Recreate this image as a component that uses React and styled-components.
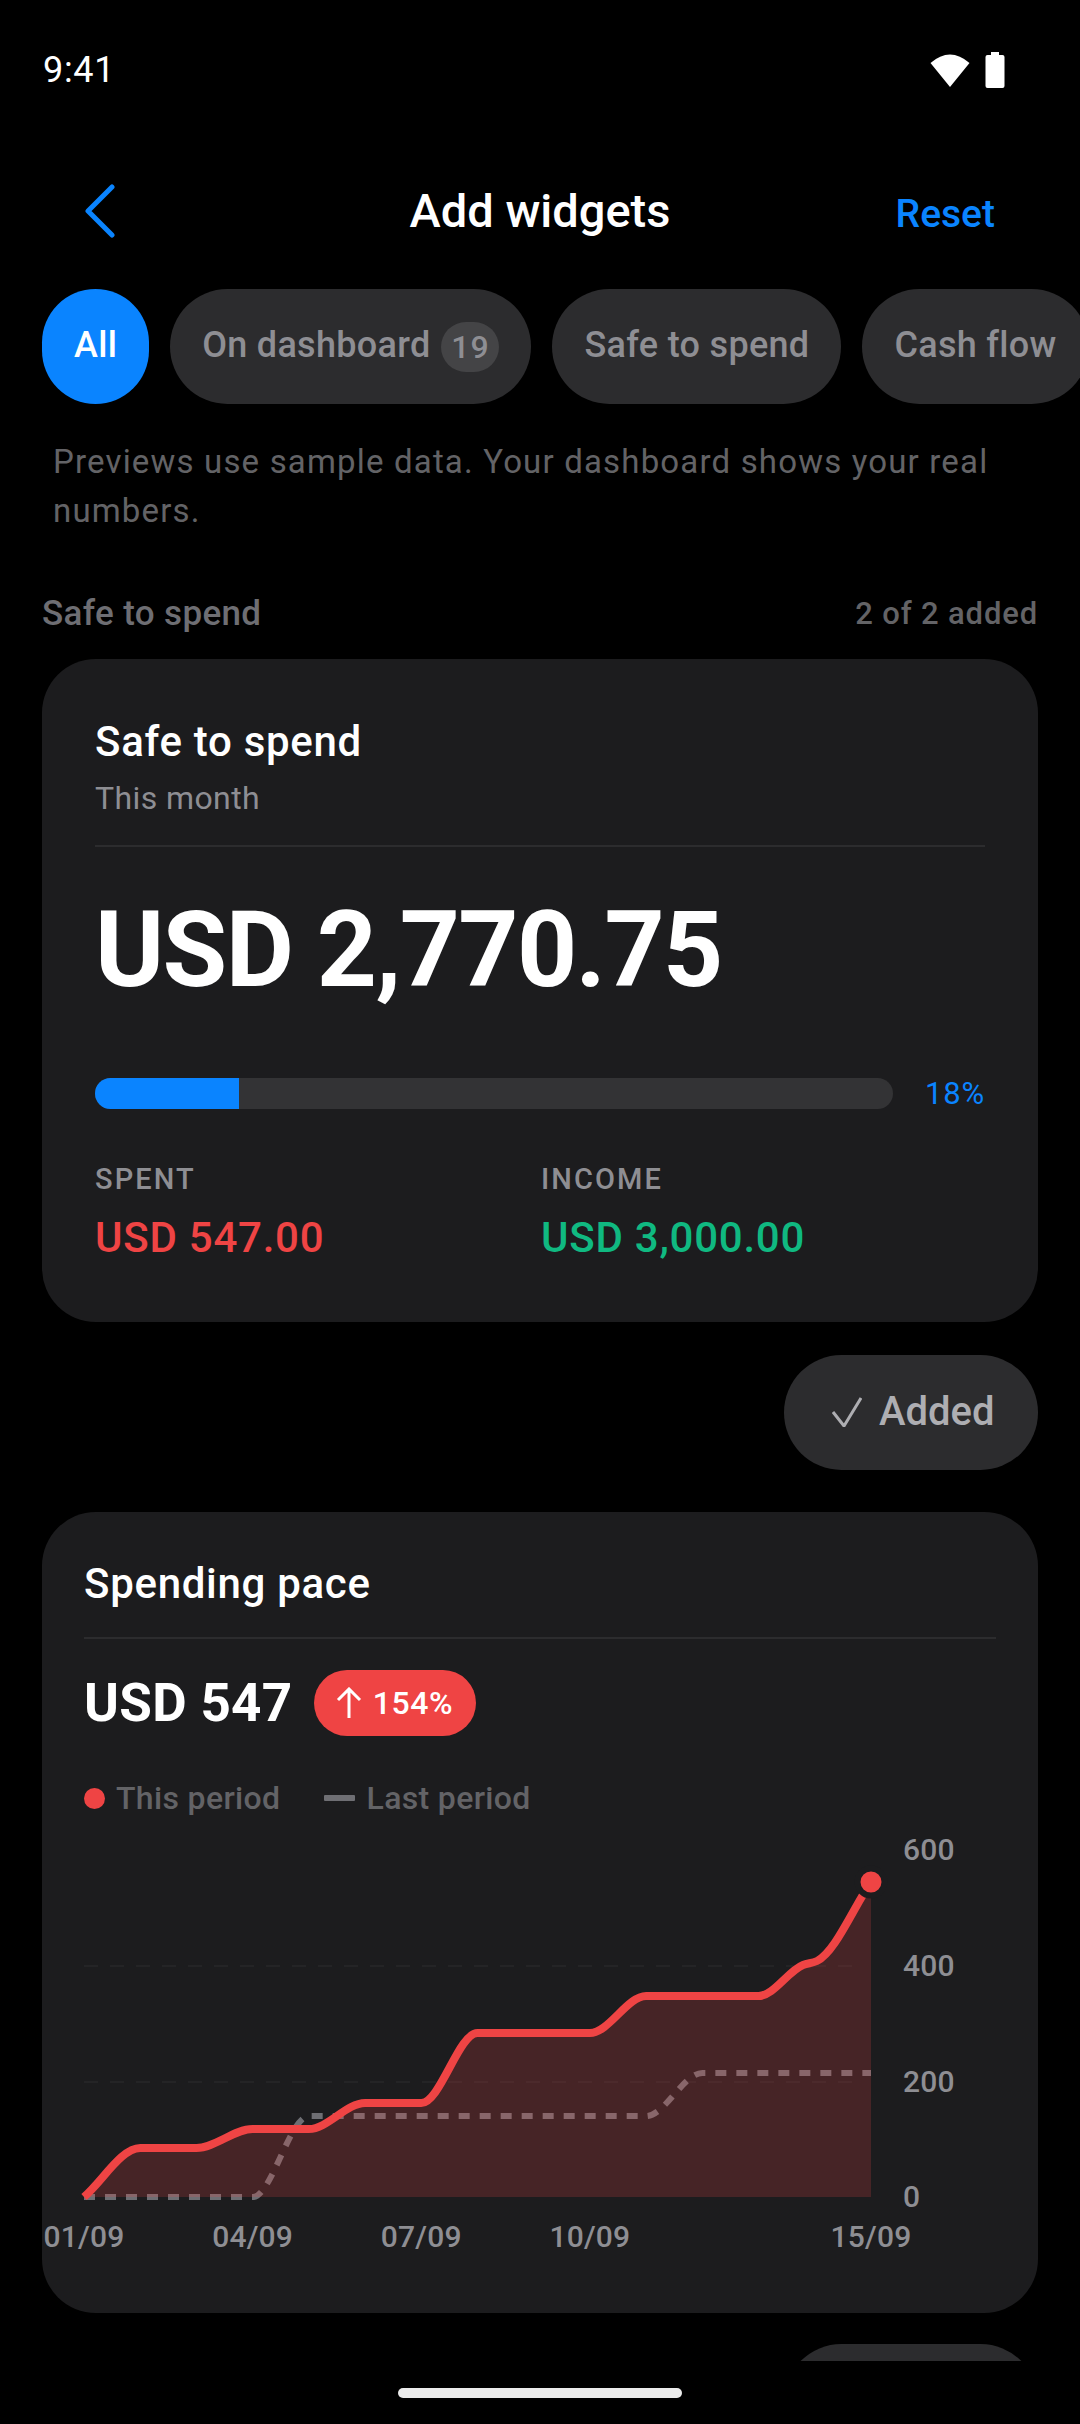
import React from "react";
import styled, { createGlobalStyle } from "styled-components";

const Global = createGlobalStyle`
  html, body { margin: 0; padding: 0; background: #000; }
  * { box-sizing: border-box; }
  body { font-family: Roboto, "Noto Sans", sans-serif; }
`;

const Page = styled.div`
  width: 1080px; height: 2424px; background: #000; color: #fff;
  overflow: hidden; display: flex; flex-direction: column;
`;
const StatusBar = styled.div`
  height: 140px; flex: none; padding: 0 75px 0 43px;
  display: flex; align-items: center; justify-content: space-between;
`;
const Clock = styled.span`font-size: 36px; letter-spacing: 0.7px;`;
const Nav = styled.div`
  height: 144px; flex: none; margin-bottom: 5px; padding: 0 85px;
  display: grid; grid-template-columns: 1fr auto 1fr; align-items: center;
`;
const Title = styled.h1`margin: 0; font-size: 47px; font-weight: 500; position: relative; top: -2px;`;
const Reset = styled.span`justify-self: end; font-size: 39px; font-weight: 500; color: #0a84ff; position: relative; top: 2px;`;
const Chips = styled.div`
  flex: none; display: flex; gap: 21px; padding-left: 42px; width: 1200px;
`;
const Chip = styled.div`
  height: 115px; flex: none; border-radius: 58px; padding: 0 32px;
  display: flex; align-items: center; gap: 11px;
  background: ${p => (p.$on ? "#0a84ff" : "#2c2c2e")};
  color: ${p => (p.$on ? "#fff" : "#8e8e93")};
  font-size: 36px; font-weight: 500; letter-spacing: 0.3px;
  span { position: relative; top: -2px; }
`;
const Count = styled.b`
  width: 58px; height: 50px; border-radius: 25px; background: #444446;
  display: flex; align-items: center; justify-content: center;
  font-size: 32px; font-weight: 500; color: #8e8e93; letter-spacing: 1px;
`;
const Content = styled.div`
  height: 1957px; flex: none; padding: 0 42px; overflow: hidden;
`;
const Note = styled.p`
  margin: 33px 11px 0; font-size: 33px; line-height: 49px; color: #636366; letter-spacing: 1.17px;
`;
const SectionHead = styled.div`
  margin-top: 58px; height: 40px; display: flex; align-items: center; justify-content: space-between;
  color: #636366; font-weight: 500;
`;
const SectionName = styled.span`font-size: 35px; letter-spacing: 0.35px; color: #6e6e73;`;
const SectionCount = styled.span`font-size: 31px; letter-spacing: 0.85px;`;
const Card = styled.section`
  background: #1c1c1e; border-radius: 54px; margin-top: ${p => p.$mt}px;
  height: ${p => p.$h}px; padding: ${p => p.$pad};
`;
const CardTitle = styled.h2`margin: 0; font-size: 42px; line-height: 50px; font-weight: 500; letter-spacing: 0.7px;`;
const CardSub = styled.div`margin-top: 10px; font-size: 32px; line-height: 42px; color: #8e8e93; letter-spacing: 0.4px;`;
const Rule = styled.hr`
  border: 0; height: 2px; background: #2c2c2e; margin: ${p => p.$m};
`;
const BigAmount = styled.div`
  margin-top: 39px; font-size: 105px; line-height: 130px; font-weight: 700; letter-spacing: -1.6px;
`;
const ProgressRow = styled.div`
  margin-top: 59px; display: flex; align-items: center; justify-content: space-between;
`;
const Track = styled.div`
  width: 798px; height: 31px; border-radius: 16px; background: #333335; overflow: hidden;
`;
const Fill = styled.div`height: 100%; background: #0a84ff;`;
const Pct = styled.span`font-size: 31px; color: #0a84ff; letter-spacing: 0.8px;`;
const Stats = styled.div`
  margin-top: 50px; display: grid; grid-template-columns: 446px 1fr;
`;
const StatLabel = styled.div`font-size: 29px; line-height: 34px; font-weight: 500; color: #8e8e93; letter-spacing: 2.1px;`;
const StatValue = styled.div`
  margin-top: 17px; font-size: 42px; line-height: 50px; font-weight: 500; letter-spacing: 0.75px;
  color: ${p => p.$c};
`;
const ActionRow = styled.div`margin-top: 33px; display: flex; justify-content: flex-end;`;
const ActionButton = styled.div`
  width: 254px; height: 115px; border-radius: 58px; background: #2c2c2e; padding: 0 0 2px 48px;
  display: flex; align-items: center; gap: 17px;
  font-size: 40px; font-weight: 500; color: #aeaeb2;
`;
const AmountRow = styled.div`display: flex; align-items: center; gap: 21px; height: 66px; margin-top: 31px;`;
const Amount = styled.div`font-size: 53px; font-weight: 700; letter-spacing: 0.3px;`;
const Badge = styled.div`
  width: 162px; height: 66px; border-radius: 33px; background: #ef4444;
  display: flex; align-items: center; justify-content: center; gap: 11px;
  font-size: 32px; font-weight: 500; letter-spacing: 0.6px;
`;
const Legend = styled.div`
  margin-top: 42px; display: flex; align-items: center; height: 40px;
  font-size: 32px; font-weight: 500; color: #636366; letter-spacing: 0.35px;
`;
const LegendDot = styled.i`width: 21px; height: 21px; border-radius: 50%; background: #ef4444; margin-right: 11px;`;
const LegendDash = styled.i`width: 31px; height: 6px; border-radius: 1px; background: #6e6e73; margin: 0 12px 0 43px;`;
const ChartSvg = styled.svg`display: block; margin: 12px 0 0 -84px;`;
const AxisText = styled.text`
  font-family: Roboto, sans-serif; font-size: 30px; font-weight: 500; fill: #8e8e93; letter-spacing: 0.2px;
`;
const HomeArea = styled.div`
  flex: 1; display: flex; justify-content: center; background: #000; padding-top: 27px;
`;
const HomeBar = styled.div`width: 284px; height: 10px; border-radius: 5px; background: #ebebeb;`;

function monotonePath(pts) {
  const n = pts.length;
  const s = [];
  for (let i = 0; i < n - 1; i++) s.push((pts[i + 1][1] - pts[i][1]) / (pts[i + 1][0] - pts[i][0]));
  const t = pts.map((_, i) => {
    if (i === 0) return s[0];
    if (i === n - 1) return s[n - 2];
    if (s[i - 1] * s[i] <= 0) return 0;
    return (2 * s[i - 1] * s[i]) / (s[i - 1] + s[i]);
  });
  let d = `M${pts[0][0]} ${pts[0][1]}`;
  for (let i = 0; i < n - 1; i++) {
    const h = (pts[i + 1][0] - pts[i][0]) / 3;
    d += `C${pts[i][0] + h} ${pts[i][1] + t[i] * h} ${pts[i + 1][0] - h} ${pts[i + 1][1] - t[i + 1] * h} ${pts[i + 1][0]} ${pts[i + 1][1]}`;
  }
  return d;
}

const dayX = i => 84 + (i * 787) / 14;
const BASE = 2197;
const thisY = [2197, 2148, 2148, 2129, 2129, 2103, 2103, 2033, 2033, 2033, 1996, 1996, 1996];
const lastY = [2197, 2197, 2197, 2197, 2116, 2116, 2116, 2116, 2116, 2116, 2116, 2073, 2073, 2073, 2073];
const thisPts = [...thisY.map((y, i) => [dayX(i), y]), [803, 1965], [817, 1961], [871, 1882]];
const lastPts = lastY.map((y, i) => [dayX(i), y]);
const thisPath = monotonePath(thisPts);
const lastPath = monotonePath(lastPts);
const top = 1830;

const Chart = () => (
  <ChartSvg width="1080" height="430" viewBox={`0 ${top} 1080 430`}>
    {[1966, 2082].map(y => (
      <line key={y} x1="84" x2="862" y1={y} y2={y} stroke="#242426" strokeWidth="2" strokeDasharray="14 12" />
    ))}
    <path d={lastPath} fill="none" stroke="#6e6e73" strokeWidth="6" strokeDasharray="11 10" />
    <path d={`${thisPath}L871 ${BASE}L84 ${BASE}Z`} fill="#ef4444" fillOpacity="0.2" />
    <path d={thisPath} fill="none" stroke="#ef4444" strokeWidth="8" strokeLinejoin="round" />
    <circle cx="871" cy="1882" r="13.5" fill="#ef4444" stroke="#1c1c1e" strokeWidth="6" />
    {[["600", 1850], ["400", 1966], ["200", 2082], ["0", 2197]].map(([t, y]) => (
      <AxisText key={t} x="903" y={y + 10}>{t}</AxisText>
    ))}
    {[["01/09", 0], ["04/09", 3], ["07/09", 6], ["10/09", 9], ["15/09", 14]].map(([t, i]) => (
      <AxisText key={t} x={dayX(i)} y="2247" textAnchor="middle">{t}</AxisText>
    ))}
  </ChartSvg>
);

export default function App() {
  return (
    <Page>
      <Global />
      <StatusBar>
        <Clock>9:41</Clock>
        <svg width="76" height="36" viewBox="0 0 76 36">
          <path d="M21 35 L1.5 11 Q21 -6 40.5 11 Z" fill="#fff" />
          <path d="M62 0h8v3h3.500a2 2 0 0 1 2 2v29a2 2 0 0 1-2 2H58.500a2 2 0 0 1-2-2V5a2 2 0 0 1 2-2h3.500z" fill="#fff" />
        </svg>
      </StatusBar>
      <Nav>
        <svg width="32" height="56" viewBox="0 0 32 56">
          <path d="M27 3 L3 27 L27 51" fill="none" stroke="#0a84ff" strokeWidth="5" strokeLinecap="round" strokeLinejoin="round" />
        </svg>
        <Title>Add widgets</Title>
        <Reset>Reset</Reset>
      </Nav>
      <Chips>
        <Chip $on><span>All</span></Chip>
        <Chip><span>On dashboard</span><Count>19</Count></Chip>
        <Chip><span>Safe to spend</span></Chip>
        <Chip><span>Cash flow</span></Chip>
      </Chips>
      <Content>
        <Note>Previews use sample data. Your dashboard shows your real numbers.</Note>
        <SectionHead>
          <SectionName>Safe to spend</SectionName>
          <SectionCount>2 of 2 added</SectionCount>
        </SectionHead>
        <Card $mt={26} $h={663} $pad="58px 53px">
          <CardTitle>Safe to spend</CardTitle>
          <CardSub>This month</CardSub>
          <Rule $m="26px 0 0" />
          <BigAmount>USD 2,770.75</BigAmount>
          <ProgressRow>
            <Track><Fill style={{ width: "18%" }} /></Track>
            <Pct>18%</Pct>
          </ProgressRow>
          <Stats>
            <div>
              <StatLabel>SPENT</StatLabel>
              <StatValue $c="#ef4444">USD 547.00</StatValue>
            </div>
            <div>
              <StatLabel>INCOME</StatLabel>
              <StatValue $c="#10b981">USD 3,000.00</StatValue>
            </div>
          </Stats>
        </Card>
        <ActionRow>
          <ActionButton>
            <svg width="30" height="30" viewBox="0 0 30 30">
              <path d="M1 15 L12 29 L29 1" fill="none" stroke="#aeaeb2" strokeWidth="3" />
            </svg>
            Added
          </ActionButton>
        </ActionRow>
        <Card $mt={42} $h={801} $pad="47px 42px">
          <CardTitle>Spending pace</CardTitle>
          <Rule $m="28px 0 0" />
          <AmountRow>
            <Amount>USD 547</Amount>
            <Badge>
              <svg width="26" height="32" viewBox="0 0 26 32">
                <path d="M13 31V2M2 13 L13 2 L24 13" fill="none" stroke="#fff" strokeWidth="3" />
              </svg>
              154%
            </Badge>
          </AmountRow>
          <Legend>
            <LegendDot />This period<LegendDash />Last period
          </Legend>
          <Chart />
        </Card>
        <ActionRow style={{ marginTop: 31 }}>
          <ActionButton />
        </ActionRow>
      </Content>
      <HomeArea><HomeBar /></HomeArea>
    </Page>
  );
}
